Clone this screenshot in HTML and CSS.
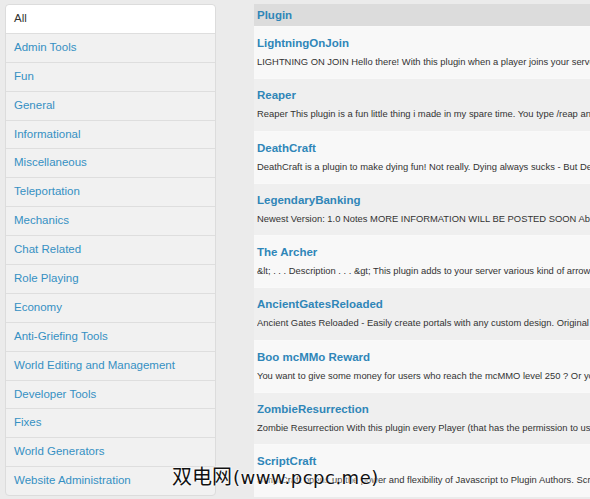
FILE: index.html
```html
<!DOCTYPE html>
<html>
<head>
<meta charset="utf-8">
<link rel="stylesheet" href="styles.css">
</head>
<body>
<div class="page">
  <ul class="cats">
    <li class="active">All</li>
    <li>Admin Tools</li>
    <li>Fun</li>
    <li>General</li>
    <li>Informational</li>
    <li>Miscellaneous</li>
    <li>Teleportation</li>
    <li>Mechanics</li>
    <li>Chat Related</li>
    <li>Role Playing</li>
    <li>Economy</li>
    <li>Anti-Griefing Tools</li>
    <li>World Editing and Management</li>
    <li>Developer Tools</li>
    <li>Fixes</li>
    <li>World Generators</li>
    <li>Website Administration</li>
  </ul>
  <div class="plugins">
    <div class="head">Plugin</div>
    <div class="row"><div class="title">LightningOnJoin</div><div class="desc">LIGHTNING ON JOIN Hello there! With this plugin when a player joins your server lightning will strike</div></div>
    <div class="row"><div class="title">Reaper</div><div class="desc">Reaper This plugin is a fun little thing i made in my spare time. You type /reap and something happens</div></div>
    <div class="row"><div class="title">DeathCraft</div><div class="desc">DeathCraft is a plugin to make dying fun! Not really. Dying always sucks - But DeathCraft helps</div></div>
    <div class="row"><div class="title">LegendaryBanking</div><div class="desc">Newest Version: 1.0 Notes MORE INFORMATION WILL BE POSTED SOON About this plugin</div></div>
    <div class="row"><div class="title">The Archer</div><div class="desc">&amp;lt; . . . Description . . . &amp;gt; This plugin adds to your server various kind of arrows and bows</div></div>
    <div class="row"><div class="title">AncientGatesReloaded</div><div class="desc">Ancient Gates Reloaded - Easily create portals with any custom design. Original plugin by</div></div>
    <div class="row"><div class="title">Boo mcMMo Reward</div><div class="desc">You want to give some money for users who reach the mcMMO level 250 ? Or you want to reward</div></div>
    <div class="row"><div class="title">ZombieResurrection</div><div class="desc">Zombie Resurrection With this plugin every Player (that has the permission to use it) can revive</div></div>
    <div class="row"><div class="title">ScriptCraft</div><div class="desc">ScriptCraft opens up the power and flexibility of Javascript to Plugin Authors. ScriptCraft lets</div></div>
  </div>
</div>
<div class="watermark"><span class="cn">双电网</span><span class="url">(www.pcpc.me)</span></div>
</body>
</html>
```
FILE: styles.css
```css
html, body {
  margin: 0;
  padding: 0;
  background: #ebebeb;
  overflow: hidden;
  font-family: "Liberation Sans", Arial, sans-serif;
}
.page {
  display: flex;
  align-items: flex-start;
  gap: 38px;
  padding: 4px 0 0 5px;
}
.cats {
  list-style: none;
  margin: 0;
  padding: 0;
  width: 209px;
  flex: none;
  border: 1px solid #dcdcdc;
  border-radius: 4px;
  background: #f1f1f1;
}
.cats li {
  font-size: 11.5px;
  color: #3590c3;
  height: 27.9px;
  line-height: 27.9px;
  padding-left: 8px;
  border-top: 1px solid #dedede;
}
.cats li:first-child {
  border-top: none;
}
.cats li.active {
  background: #ffffff;
  color: #333333;
  border-radius: 4px 4px 0 0;
}
.plugins {
  flex: 1;
  min-width: 0;
  overflow: hidden;
}
.head {
  height: 22px;
  line-height: 22px;
  background: #dcdcdc;
  color: #2f86b8;
  font-weight: bold;
  font-size: 11.5px;
  padding-left: 3px;
}
.row {
  height: 52.3px;
  border-top: 1px solid #f9f9f9;
  padding-left: 3px;
  box-sizing: border-box;
  background: #efefef;
}
.row:nth-child(even) {
  background: #f8f8f8;
}
.title {
  font-weight: bold;
  font-size: 11.5px;
  color: #2f86b8;
  padding-top: 9px;
  line-height: 14px;
}
.desc {
  font-size: 9.4px;
  color: #333333;
  margin-top: 6px;
  line-height: 12px;
  white-space: nowrap;
  overflow: hidden;
}
.watermark {
  position: absolute;
  left: 172px;
  top: 461px;
  color: #111;
  text-shadow: 0 0 2px #fff, 0 0 2px #fff, 0 0 3px #fff;
  white-space: nowrap;
  display: flex;
  align-items: baseline;
}
.watermark .cn {
  font-family: "Noto Sans CJK SC", sans-serif;
  font-size: 20px;
}
.watermark .url {
  font-family: "DejaVu Sans", sans-serif;
  font-size: 18px;
  letter-spacing: 0.5px;
  margin-left: 1px;
}
```
